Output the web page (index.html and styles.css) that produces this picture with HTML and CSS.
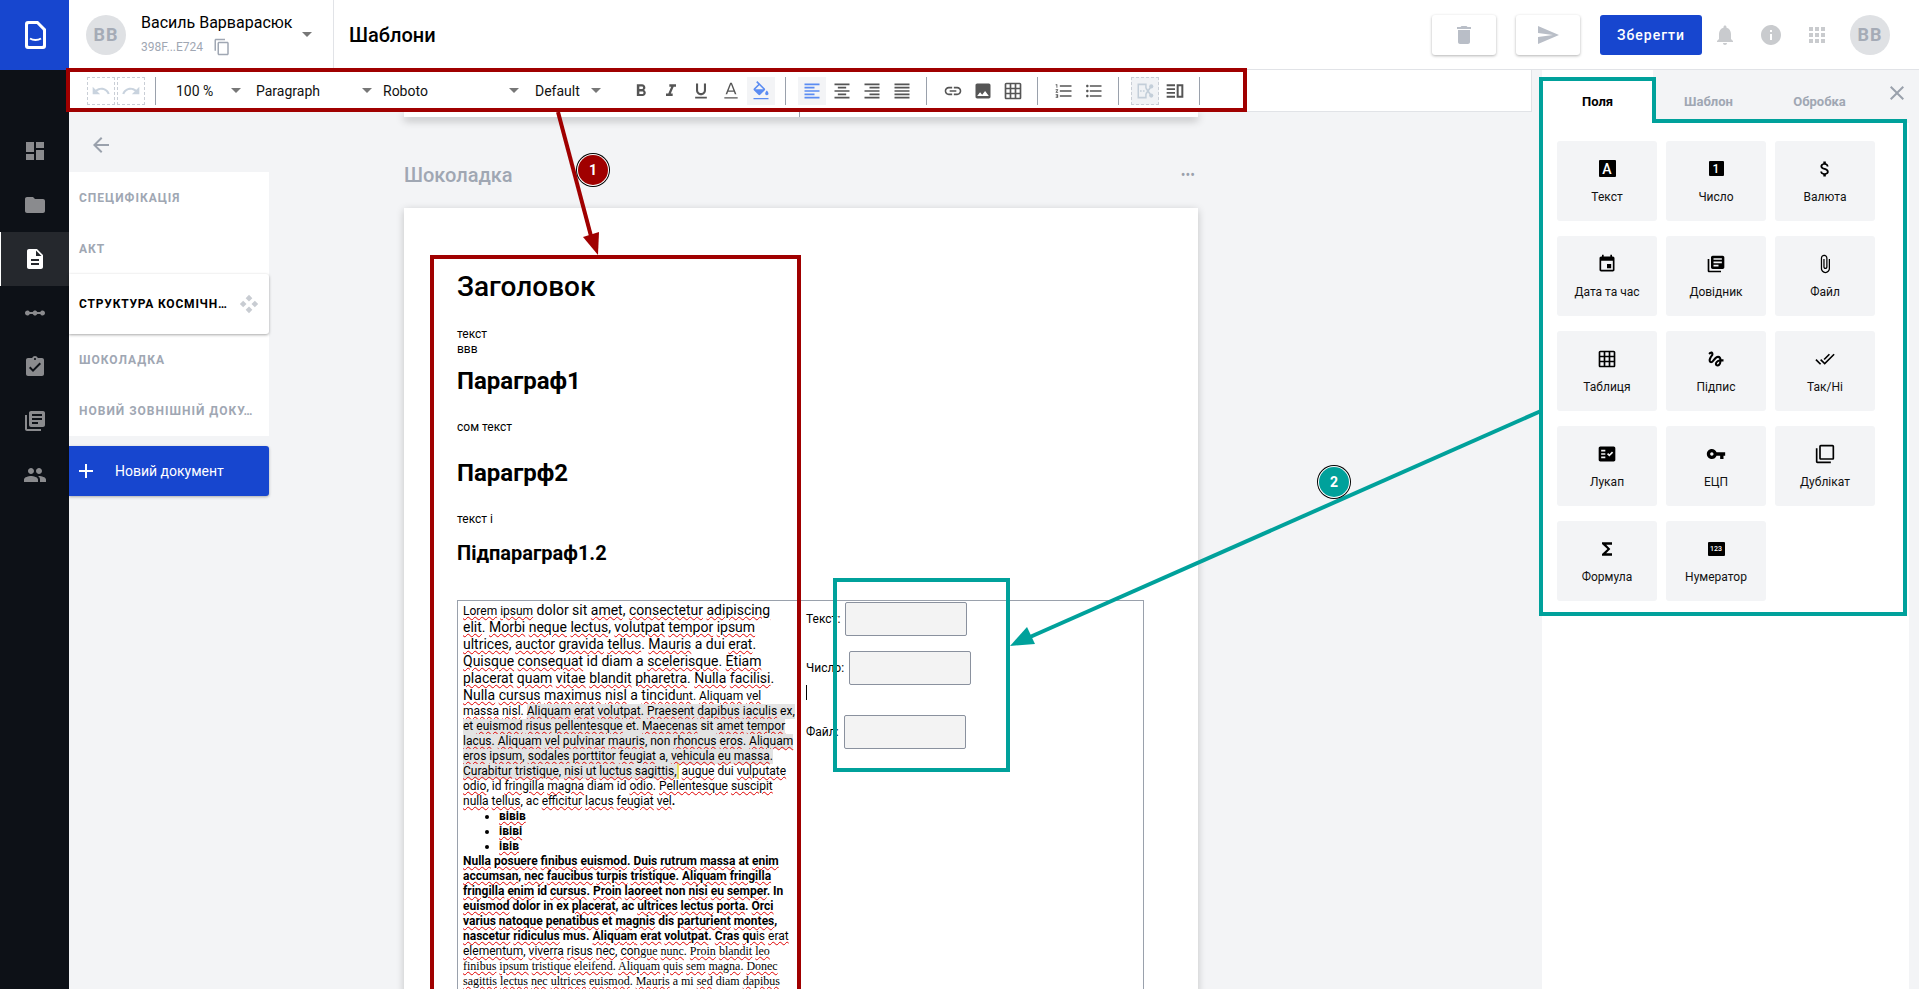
FILE: index.html
```html
<!DOCTYPE html>
<html lang="uk">
<head>
  <meta charset="UTF-8">
  <title>Шаблони</title>
  <link rel="stylesheet" href="styles.css">
</head>
<body>
  <!-- icon sprite -->
  <svg class="sprite" xmlns="http://www.w3.org/2000/svg">
    <symbol id="i-dashboard" viewBox="0 0 24 24"><path d="M3 13h8V3H3v10zm0 8h8v-6H3v6zm10 0h8V11h-8v10zm0-18v6h8V3h-8z"/></symbol>
    <symbol id="i-folder" viewBox="0 0 24 24"><path d="M10 4H4c-1.1 0-1.99.9-1.99 2L2 18c0 1.1.9 2 2 2h16c1.1 0 2-.9 2-2V8c0-1.1-.9-2-2-2h-8l-2-2z"/></symbol>
    <symbol id="i-doc" viewBox="0 0 24 24"><path d="M14 2H6c-1.1 0-1.99.9-1.99 2L4 20c0 1.1.89 2 1.99 2H18c1.1 0 2-.9 2-2V8l-6-6zm2 16H8v-2h8v2zm0-4H8v-2h8v2zm-3-5V3.5L18.5 9H13z"/></symbol>
    <symbol id="i-scale" viewBox="0 0 24 24"><path d="M19.5 9.5c-1.03 0-1.9.62-2.29 1.5h-2.92c-.39-.88-1.26-1.5-2.29-1.5s-1.9.62-2.29 1.5H6.79c-.39-.88-1.26-1.5-2.29-1.5C3.12 9.5 2 10.62 2 12s1.12 2.5 2.5 2.5c1.03 0 1.9-.62 2.29-1.5h2.92c.39.88 1.26 1.5 2.29 1.5s1.9-.62 2.29-1.5h2.92c.39.88 1.26 1.5 2.29 1.5 1.38 0 2.5-1.12 2.5-2.5s-1.12-2.5-2.5-2.5z"/></symbol>
    <symbol id="i-task" viewBox="0 0 24 24"><path d="M19 3h-4.18C14.4 1.84 13.3 1 12 1c-1.3 0-2.4.84-2.82 2H5c-1.1 0-2 .9-2 2v14c0 1.1.9 2 2 2h14c1.1 0 2-.9 2-2V5c0-1.1-.9-2-2-2zm-7 0c.55 0 1 .45 1 1s-.45 1-1 1-1-.45-1-1 .45-1 1-1zm-2 14l-4-4 1.41-1.41L10 14.17l6.59-6.59L18 9l-8 8z"/></symbol>
    <symbol id="i-library" viewBox="0 0 24 24"><path d="M4 6H2v14c0 1.1.9 2 2 2h14v-2H4V6zm16-4H8c-1.1 0-2 .9-2 2v12c0 1.1.9 2 2 2h12c1.1 0 2-.9 2-2V4c0-1.1-.9-2-2-2zm-1 9H9V9h10v2zm-4 4H9v-2h6v2zm4-8H9V5h10v2z"/></symbol>
    <symbol id="i-people" viewBox="0 0 24 24"><path d="M16 11c1.66 0 2.99-1.34 2.99-3S17.66 5 16 5c-1.66 0-3 1.34-3 3s1.34 3 3 3zm-8 0c1.66 0 2.99-1.34 2.99-3S9.66 5 8 5C6.34 5 5 6.34 5 8s1.34 3 3 3zm0 2c-2.33 0-7 1.17-7 3.5V19h14v-2.5c0-2.33-4.67-3.5-7-3.5zm8 0c-.29 0-.62.02-.97.05 1.16.84 1.97 1.97 1.97 3.45V19h6v-2.5c0-2.33-4.67-3.5-7-3.5z"/></symbol>
    <symbol id="i-copy" viewBox="0 0 24 24"><path d="M16 1H4c-1.1 0-2 .9-2 2v14h2V3h12V1zm3 4H8c-1.1 0-2 .9-2 2v14c0 1.1.9 2 2 2h11c1.1 0 2-.9 2-2V7c0-1.1-.9-2-2-2zm0 16H8V7h11v14z"/></symbol>
    <symbol id="i-delete" viewBox="0 0 24 24"><path d="M6 19c0 1.1.9 2 2 2h8c1.1 0 2-.9 2-2V7H6v12zM19 4h-3.5l-1-1h-5l-1 1H5v2h14V4z"/></symbol>
    <symbol id="i-send" viewBox="0 0 24 24"><path d="M2.01 21L23 12 2.01 3 2 10l15 2-15 2z"/></symbol>
    <symbol id="i-bell" viewBox="0 0 24 24"><path d="M12 22c1.1 0 2-.9 2-2h-4c0 1.1.89 2 2 2zm6-6v-5c0-3.07-1.64-5.64-4.5-6.32V4c0-.83-.67-1.5-1.5-1.5s-1.5.67-1.5 1.5v.68C7.63 5.36 6 7.92 6 11v5l-2 2v1h16v-1l-2-2z"/></symbol>
    <symbol id="i-info" viewBox="0 0 24 24"><path d="M12 2C6.48 2 2 6.48 2 12s4.48 10 10 10 10-4.48 10-10S17.52 2 12 2zm1 15h-2v-6h2v6zm0-8h-2V7h2v2z"/></symbol>
    <symbol id="i-apps" viewBox="0 0 24 24"><path d="M4 8h4V4H4v4zm6 12h4v-4h-4v4zm-6 0h4v-4H4v4zm0-6h4v-4H4v4zm6 0h4v-4h-4v4zm6-10v4h4V4h-4zm-6 4h4V4h-4v4zm6 6h4v-4h-4v4zm0 6h4v-4h-4v4z"/></symbol>
    <symbol id="i-undo" viewBox="0 0 24 24"><path d="M12.5 8c-2.65 0-5.05.99-6.9 2.6L2 7v9h9l-3.62-3.62c1.39-1.16 3.16-1.88 5.12-1.88 3.54 0 6.55 2.31 7.6 5.5l2.37-.78C21.08 11.03 17.15 8 12.5 8z"/></symbol>
    <symbol id="i-redo" viewBox="0 0 24 24"><path d="M18.4 10.6C16.55 8.99 14.15 8 11.5 8c-4.65 0-8.58 3.03-9.96 7.22L3.9 16c1.05-3.19 4.05-5.5 7.6-5.5 1.95 0 3.73.72 5.12 1.88L13 16h9V7l-3.6 3.6z"/></symbol>
    <symbol id="i-bold" viewBox="0 0 24 24"><path d="M15.6 10.79c.97-.67 1.65-1.77 1.65-2.79 0-2.26-1.75-4-4-4H7v14h7.04c2.09 0 3.71-1.7 3.71-3.79 0-1.52-.86-2.82-2.15-3.42zM10 6.5h3c.83 0 1.5.67 1.5 1.5s-.67 1.5-1.5 1.5h-3v-3zm3.5 9H10v-3h3.5c.83 0 1.5.67 1.5 1.5s-.67 1.5-1.5 1.5z"/></symbol>
    <symbol id="i-italic" viewBox="0 0 24 24"><path d="M10 4v3h2.21l-3.42 8H6v3h8v-3h-2.21l3.42-8H18V4z"/></symbol>
    <symbol id="i-underline" viewBox="0 0 24 24"><path d="M12 17c3.31 0 6-2.69 6-6V3h-2.5v8c0 1.93-1.57 3.5-3.5 3.5S8.5 12.93 8.5 11V3H6v8c0 3.31 2.69 6 6 6zm-7 2v2h14v-2H5z"/></symbol>
    <symbol id="i-color" viewBox="0 0 24 24"><path d="M11 2L5.500 16h1.900l1.100-3h7l1.100 3h1.900L13 2h-2zm-1.900 9.400L12 4l2.900 7.400H9.100zM4 19.500h16v1.600H4z"/></symbol>
    <symbol id="i-fill" viewBox="0 0 24 24"><path d="M16.560 8.940L7.620 0 6.210 1.410l2.380 2.380-5.150 5.150c-.59.59-.59 1.540 0 2.120l5.500 5.500c.29.29.68.44 1.060.44s.77-.15 1.060-.44l5.500-5.500c.59-.58.59-1.530 0-2.120zM5.210 10L10 5.210 14.790 10H5.210zM19 11.500s-2 2.170-2 3.500c0 1.100.9 2 2 2s2-.9 2-2c0-1.330-2-3.500-2-3.500zM3 20.400h18V22H3z"/></symbol>
    <symbol id="i-left" viewBox="0 0 24 24"><path d="M15 15H3v2h12v-2zm0-8H3v2h12V7zM3 13h18v-2H3v2zm0 8h18v-2H3v2zM3 3v2h18V3H3z"/></symbol>
    <symbol id="i-center" viewBox="0 0 24 24"><path d="M7 15v2h10v-2H7zm-4 6h18v-2H3v2zm0-8h18v-2H3v2zm4-6v2h10V7H7zM3 3v2h18V3H3z"/></symbol>
    <symbol id="i-right" viewBox="0 0 24 24"><path d="M3 21h18v-2H3v2zm6-4h12v-2H9v2zm-6-4h18v-2H3v2zm6-4h12V7H9v2zM3 3v2h18V3H3z"/></symbol>
    <symbol id="i-justify" viewBox="0 0 24 24"><path d="M3 21h18v-2H3v2zm0-4h18v-2H3v2zm0-4h18v-2H3v2zm0-4h18V7H3v2zm0-6v2h18V3H3z"/></symbol>
    <symbol id="i-link" viewBox="0 0 24 24"><path d="M3.9 12c0-1.710 1.390-3.100 3.100-3.100h4V7H7c-2.760 0-5 2.240-5 5s2.240 5 5 5h4v-1.900H7c-1.710 0-3.100-1.390-3.100-3.100zM8 13h8v-2H8v2zm9-6h-4v1.900h4c1.710 0 3.100 1.390 3.100 3.100s-1.390 3.100-3.100 3.100h-4V17h4c2.760 0 5-2.240 5-5s-2.240-5-5-5z"/></symbol>
    <symbol id="i-image" viewBox="0 0 24 24"><path d="M21 19V5c0-1.100-.9-2-2-2H5c-1.100 0-2 .9-2 2v14c0 1.100.9 2 2 2h14c1.100 0 2-.9 2-2zM8.500 13.500l2.500 3.010L14.500 12l4.500 6H5l3.500-4.500z"/></symbol>
    <symbol id="i-grid" viewBox="0 0 24 24"><path d="M20 2H4c-1.1 0-2 .9-2 2v16c0 1.1.9 2 2 2h16c1.1 0 2-.9 2-2V4c0-1.1-.9-2-2-2zM8 20H4v-4h4v4zm0-6H4v-4h4v4zm0-6H4V4h4v4zm6 12h-4v-4h4v4zm0-6h-4v-4h4v4zm0-6h-4V4h4v4zm6 12h-4v-4h4v4zm0-6h-4v-4h4v4zm0-6h-4V4h4v4z"/></symbol>
    <symbol id="i-ol" viewBox="0 0 24 24"><path d="M2 17h2v.5H3v1h1v.5H2v1h3v-4H2v1zm1-9h1V4H2v1h1v3zm-1 3h1.800L2 13.100v.9h3v-1H3.200L5 10.900V10H2v1zm5-6v2h14V5H7zm0 14h14v-2H7v2zm0-6h14v-2H7v2z"/></symbol>
    <symbol id="i-ul" viewBox="0 0 24 24"><path d="M4 10.500c-.83 0-1.500.67-1.500 1.500s.67 1.500 1.500 1.500 1.500-.67 1.500-1.500-.67-1.500-1.500-1.500zm0-6c-.83 0-1.500.67-1.500 1.500S3.170 7.500 4 7.500 5.500 6.830 5.500 6 4.830 4.500 4 4.500zm0 12c-.83 0-1.500.68-1.500 1.500s.68 1.500 1.500 1.500 1.500-.68 1.500-1.500-.67-1.500-1.500-1.500zM7 19h14v-2H7v2zm0-6h14v-2H7v2zm0-8v2h14V5H7z"/></symbol>
    <symbol id="i-split" viewBox="0 0 24 24"><path d="M14 8.500V3H3v18h11v-5.500h-1.800V19H4.800V5h7.400v3.500zM6 11.200h2v1.600H6zm3.500 0h2v1.600h-2z"/><circle cx="19.500" cy="6.500" r="2.500"/><circle cx="19.500" cy="17.500" r="2.500"/><path d="M18.300 8.200L13 15.500M18.300 15.800L13 8.500" fill="none" stroke="currentColor" stroke-width="2"/></symbol>
    <symbol id="i-column" viewBox="0 0 24 24"><path d="M2 4h10v2.200H2zm0 4.600h10v2.200H2zm0 4.600h10v2.200H2zm0 4.600h10V20H2zM14 4h8v16h-8zm2.400 2.300v11.400h3.200V6.300z"/></symbol>
    <symbol id="i-money" viewBox="0 0 24 24"><path d="M11.800 10.900c-2.270-.59-3-1.200-3-2.150 0-1.090 1.010-1.850 2.700-1.850 1.780 0 2.440.85 2.500 2.100h2.210c-.07-1.720-1.120-3.300-3.210-3.810V3h-3v2.160c-1.940.42-3.500 1.680-3.500 3.610 0 2.310 1.910 3.460 4.700 4.130 2.500.6 3 1.480 3 2.410 0 .69-.49 1.790-2.700 1.790-2.060 0-2.870-.92-2.980-2.100h-2.200c.12 2.190 1.760 3.420 3.680 3.830V21h3v-2.150c1.950-.37 3.500-1.500 3.500-3.550 0-2.840-2.430-3.810-4.700-4.400z"/></symbol>
    <symbol id="i-event" viewBox="0 0 24 24"><path d="M17 12h-5v5h5v-5zM16 1v2H8V1H6v2H5c-1.110 0-1.990.9-1.990 2L3 19c0 1.100.89 2 2 2h14c1.100 0 2-.9 2-2V5c0-1.100-.9-2-2-2h-1V1h-2zm3 18H5V8h14v11z"/></symbol>
    <symbol id="i-attach" viewBox="0 0 24 24"><path d="M16.500 6v11.500c0 2.210-1.790 4-4 4s-4-1.790-4-4V5c0-1.380 1.120-2.500 2.500-2.500s2.500 1.120 2.500 2.500v10.500c0 .55-.45 1-1 1s-1-.45-1-1V6H10v9.500c0 1.380 1.120 2.500 2.500 2.500s2.500-1.120 2.500-2.500V5c0-2.210-1.790-4-4-4S7 2.790 7 5v12.500c0 3.040 2.460 5.500 5.500 5.500s5.500-2.460 5.500-5.500V6h-1.500z"/></symbol>
    <symbol id="i-gesture" viewBox="0 0 24 24"><path d="M4.590 6.890c.7-.71 1.400-1.350 1.710-1.220.5.2 0 1.030-.3 1.520-.25.42-2.860 3.890-2.860 6.310 0 1.280.48 2.340 1.340 2.980.75.56 1.740.73 2.640.46 1.070-.31 1.950-1.400 3.060-2.770 1.210-1.490 2.830-3.440 4.080-3.440 1.630 0 1.650 1.010 1.760 1.790-3.780.64-5.380 3.670-5.380 5.370 0 1.700 1.440 3.090 3.210 3.090 1.630 0 4.290-1.330 4.690-6.100H21v-2.500h-2.470c-.15-1.650-1.090-4.200-4.030-4.200-2.250 0-4.180 1.910-4.940 2.840-.58.73-2.060 2.480-2.290 2.720-.25.3-.68.84-1.110.84-.45 0-.72-.83-.36-1.920.35-1.090 1.400-2.860 1.850-3.520.78-1.140 1.300-1.920 1.300-3.280C8.950 3.690 7.310 3 6.440 3 5.120 3 3.970 4 3.720 4.250c-.36.36-.66.66-.88.93l1.750 1.710zm9.290 11.660c-.31 0-.74-.26-.74-.72 0-.6.73-2.200 2.870-2.760-.3 2.690-1.430 3.480-2.130 3.480z"/></symbol>
    <symbol id="i-done" viewBox="0 0 24 24"><path d="M18 7l-1.410-1.410-6.340 6.340 1.410 1.410L18 7zm4.240-1.410L11.660 16.170 7.480 12l-1.410 1.410L11.660 19l12-12-1.420-1.410zM.41 13.410L6 19l1.410-1.410L1.830 12 .41 13.410z"/></symbol>
    <symbol id="i-lookup" viewBox="0 0 24 24"><path d="M20 3H4c-1.100 0-2 .9-2 2v14c0 1.100.9 2 2 2h16c1.100 0 2-.9 2-2V5c0-1.100-.9-2-2-2zM10 17H5v-2h5v2zm0-4H5v-2h5v2zm0-4H5V7h5v2zm4.820 6L12 12.160l1.410-1.410 1.410 1.420L17.990 9l1.420 1.420L14.820 15z"/></symbol>
    <symbol id="i-key" viewBox="0 0 24 24"><path d="M12.650 10C11.830 7.670 9.610 6 7 6c-3.310 0-6 2.690-6 6s2.690 6 6 6c2.610 0 4.830-1.670 5.650-4H17v4h4v-4h2v-4H12.650zM7 14c-1.100 0-2-.9-2-2s.9-2 2-2 2 .9 2 2-.9 2-2 2z"/></symbol>
    <symbol id="i-dup" viewBox="0 0 24 24"><path d="M3 5H1v16c0 1.100.9 2 2 2h16v-2H3V5zm18-4H7c-1.100 0-2 .9-2 2v14c0 1.100.9 2 2 2h14c1.100 0 2-.9 2-2V3c0-1.100-.9-2-2-2zm0 16H7V3h14v14z"/></symbol>
    <symbol id="i-sum" viewBox="0 0 24 24"><path d="M18 4H6v2l6.500 6L6 18v2h12v-3h-7l5-5-5-5h7z"/></symbol>
    <symbol id="i-close" viewBox="0 0 24 24"><path d="M19 6.410L17.590 5 12 10.590 6.410 5 5 6.410 10.590 12 5 17.590 6.410 19 12 13.410 17.590 19 19 17.590 13.410 12z"/></symbol>
    <symbol id="i-back" viewBox="0 0 24 24"><path d="M20 11H7.830l5.590-5.590L12 4l-8 8 8 8 1.410-1.410L7.830 13H20v-2z"/></symbol>
    <symbol id="i-add" viewBox="0 0 24 24"><path d="M19 13h-6v6h-2v-6H5v-2h6V5h2v6h6v2z"/></symbol>
    <symbol id="i-move" viewBox="0 0 24 24"><path d="M12 1l4 4-4 4-4-4zM12 15l4 4-4 4-4-4zM5 8l4 4-4 4-4-4zM19 8l4 4-4 4-4-4z"/></symbol>
  </svg>

  <div class="app">
    <!-- main rail -->
    <nav class="rail">
      <div class="rail-logo">
        <svg class="logo" viewBox="0 0 22 28"><path d="M4 0h10l8 8v17a3 3 0 0 1-3 3H4a3 3 0 0 1-3-3V3a3 3 0 0 1 3-3z" fill="#fff"/><path d="M5 3h7.800L19 9.200V24a1 1 0 0 1-1 1H5a1 1 0 0 1-1-1V4a1 1 0 0 1 1-1z" fill="#1746cf"/><path d="M6 17.500c3 2 8 2 11 0" fill="none" stroke="#fff" stroke-width="2"/></svg>
      </div>
      <div class="rail-items">
        <a class="rail-item"><svg class="ic-24"><use href="#i-dashboard"/></svg></a>
        <a class="rail-item"><svg class="ic-24"><use href="#i-folder"/></svg></a>
        <a class="rail-item active"><svg class="ic-24"><use href="#i-doc"/></svg></a>
        <a class="rail-item"><svg class="ic-24"><use href="#i-scale"/></svg></a>
        <a class="rail-item"><svg class="ic-24"><use href="#i-task"/></svg></a>
        <a class="rail-item"><svg class="ic-24"><use href="#i-library"/></svg></a>
        <a class="rail-item"><svg class="ic-24"><use href="#i-people"/></svg></a>
      </div>
    </nav>

    <div class="main">
      <header class="header">
        <div class="user">
          <div class="avatar">ВВ</div>
          <div class="user-info">
            <div class="user-name">Василь Варварасюк</div>
            <div class="user-id">398F...E724 <svg class="ic-copy"><use href="#i-copy"/></svg></div>
          </div>
          <span class="caret user-caret"></span>
        </div>
        <h1 class="page-title">Шаблони</h1>
        <div class="header-actions">
          <button class="btn-ghost"><svg class="ic-24"><use href="#i-delete"/></svg></button>
          <button class="btn-ghost"><svg class="ic-24"><use href="#i-send"/></svg></button>
          <button class="btn-save">Зберегти</button>
          <svg class="ic-24 head-ic bell"><use href="#i-bell"/></svg>
          <svg class="ic-24 head-ic"><use href="#i-info"/></svg>
          <svg class="ic-24 head-ic"><use href="#i-apps"/></svg>
          <div class="avatar">ВВ</div>
        </div>
      </header>

      <div class="body">
        <div class="center">
          <div class="toolbar">
            <div class="tool dashed"><svg class="ic-20"><use href="#i-undo"/></svg></div>
            <div class="tool dashed"><svg class="ic-20"><use href="#i-redo"/></svg></div>
            <span class="sep first"></span>
            <div class="select s-zoom">100 %<span class="caret"></span></div>
            <div class="select s-para">Paragraph<span class="caret"></span></div>
            <div class="select s-font">Roboto<span class="caret"></span></div>
            <div class="select s-size">Default<span class="caret"></span></div>
            <div class="tools">
              <div class="tool"><svg class="ic-20"><use href="#i-bold"/></svg></div>
              <div class="tool"><svg class="ic-20"><use href="#i-italic"/></svg></div>
              <div class="tool"><svg class="ic-20"><use href="#i-underline"/></svg></div>
              <div class="tool"><svg class="ic-20"><use href="#i-color"/></svg></div>
              <div class="tool on"><svg class="ic-20"><use href="#i-fill"/></svg></div>
            </div>
            <span class="sep"></span>
            <div class="tools">
              <div class="tool on"><svg class="ic-20"><use href="#i-left"/></svg></div>
              <div class="tool"><svg class="ic-20"><use href="#i-center"/></svg></div>
              <div class="tool"><svg class="ic-20"><use href="#i-right"/></svg></div>
              <div class="tool"><svg class="ic-20"><use href="#i-justify"/></svg></div>
            </div>
            <span class="sep"></span>
            <div class="tools">
              <div class="tool"><svg class="ic-20"><use href="#i-link"/></svg></div>
              <div class="tool"><svg class="ic-20"><use href="#i-image"/></svg></div>
              <div class="tool"><svg class="ic-20"><use href="#i-grid"/></svg></div>
            </div>
            <span class="sep"></span>
            <div class="tools">
              <div class="tool"><svg class="ic-20"><use href="#i-ol"/></svg></div>
              <div class="tool"><svg class="ic-20"><use href="#i-ul"/></svg></div>
            </div>
            <span class="sep"></span>
            <div class="tools">
              <div class="tool dashed pale"><svg class="ic-20"><use href="#i-split"/></svg></div>
              <div class="tool"><svg class="ic-20"><use href="#i-column"/></svg></div>
            </div>
            <span class="sep"></span>
          </div>

          <div class="workspace">
            <aside class="doc-nav">
              <div class="back"><svg class="ic-24"><use href="#i-back"/></svg></div>
              <ul class="doc-list">
                <li>СПЕЦИФІКАЦІЯ</li>
                <li>АКТ</li>
                <li class="active"><span class="doc-name">СТРУКТУРА КОСМІЧН…</span><svg class="ic-move"><use href="#i-move"/></svg></li>
                <li>ШОКОЛАДКА</li>
                <li>НОВИЙ ЗОВНІШНІЙ ДОКУ…</li>
              </ul>
              <button class="btn-new"><svg class="ic-24"><use href="#i-add"/></svg><span>Новий документ</span></button>
            </aside>

            <section class="docs">
              <div class="prev-page"><span class="prev-line"></span></div>
              <div class="doc-head">
                <span>Шоколадка</span>
                <span class="doc-more">•••</span>
              </div>
              <article class="page">
                <h2 class="t1">Заголовок</h2>
                <p class="txt mt24">текст<br>ввв</p>
                <h3 class="t2 mt10">Параграф1</h3>
                <p class="txt mt25">сом текст</p>
                <h3 class="t2 mt24">Парагрф2</h3>
                <p class="txt mt25">текст і</p>
                <h4 class="t3">Підпараграф1.2</h4>

                <div class="tbl">
                  <div class="cell-left">
                    <div class="big"><span class="small"><u>Lorem</u> <u>ipsum</u></span> dolor sit <u>amet</u>, <u>consectetur</u> <u>adipiscing</u></div>
                    <div class="big"><u>elit</u>. <u>Morbi</u> <u>neque</u> <u>lectus</u>, <u>volutpat</u> <u>tempor</u> <u>ipsum</u></div>
                    <div class="big"><u>ultrices</u>, <u>auctor</u> <u>gravida</u> <u>tellus</u>. <u>Mauris</u> a dui <u>erat</u>.</div>
                    <div class="big"><u>Quisque</u> <u>consequat</u> id diam a <u>scelerisque</u>. <u>Etiam</u></div>
                    <div class="big"><u>placerat</u> <u>quam</u> <u>vitae</u> <u>blandit</u> <u>pharetra</u>. <u>Nulla</u> <u>facilisi</u>.</div>
                    <div class="big"><u>Nulla</u> <u>cursus</u> <u>maximus</u> <u>nisl</u> a <u>tincid</u><span class="small"><u>unt</u>. <u>Aliquam</u> <u>vel</u></span></div>
                    <div class="ln"><u>massa</u> <u>nisl</u>. <mark><u>Aliquam</u> <u>erat</u> <u>volutpat</u>. <u>Praesent</u> <u>dapibus</u> <u>iaculis</u> ex,</mark></div>
                    <div class="ln"><mark>et <u>euismod</u> <u>risus</u> <u>pellentesque</u> et. <u>Maecenas</u> sit <u>amet</u> <u>tempor</u></mark></div>
                    <div class="ln"><mark><u>lacus</u>. <u>Aliquam</u> <u>vel</u> <u>pulvinar</u> <u>mauris</u>, non <u>rhoncus</u> <u>eros</u>. <u>Aliquam</u></mark></div>
                    <div class="ln"><mark><u>eros</u> <u>ipsum</u>, <u>sodales</u> <u>porttitor</u> <u>feugiat</u> a, <u>vehicula</u> <u>eu</u> <u>massa</u>.</mark></div>
                    <div class="ln"><mark><u>Curabitur</u> <u>tristique</u>, <u>nisi</u> <u>ut</u> <u>luctus</u> <u>sagittis</u>,</mark><span class="cursor-mark"></span> <u>augue</u> dui <u>vulputate</u></div>
                    <div class="ln"><u>odio</u>, id <u>fringilla</u> <u>magna</u> diam id <u>odio</u>. <u>Pellentesque</u> <u>suscipit</u></div>
                    <div class="ln"><u>nulla</u> <u>tellus</u>, ac <u>efficitur</u> <u>lacus</u> <u>feugiat</u> <u>vel</u><b>.</b></div>
                    <ul class="bullets">
                      <li><u>вівів</u></li>
                      <li><u>івіві</u></li>
                      <li><u>івів</u></li>
                    </ul>
                    <div class="ln strong"><u>Nulla</u> <u>posuere</u> <u>finibus</u> <u>euismod</u>. <u>Duis</u> <u>rutrum</u> <u>massa</u> at <u>enim</u></div>
                    <div class="ln strong"><u>accumsan</u>, <u>nec</u> <u>faucibus</u> <u>turpis</u> <u>tristique</u>. <u>Aliquam</u> <u>fringilla</u></div>
                    <div class="ln strong"><u>fringilla</u> <u>enim</u> id <u>cursus</u>. <u>Proin</u> <u>laoreet</u> non <u>nisi</u> <u>eu</u> <u>semper</u>. In</div>
                    <div class="ln strong"><u>euismod</u> dolor in ex <u>placerat</u>, ac <u>ultrices</u> <u>lectus</u> <u>porta</u>. <u>Orci</u></div>
                    <div class="ln strong"><u>varius</u> <u>natoque</u> <u>penatibus</u> et <u>magnis</u> dis <u>parturient</u> <u>montes</u>,</div>
                    <div class="ln strong"><u>nascetur</u> <u>ridiculus</u> mus. <u>Aliquam</u> <u>erat</u> <u>volutpat</u>. <u>Cras</u> <u>qu</u><span class="plain"><u>is</u> <u>erat</u></span></div>
                    <div class="ln"><u>elementum</u>, <u>viverra</u> <u>risus</u> <u>nec</u>, <u>con</u><span class="serif"><u>gue</u> <u>nunc</u>. <u>Proin</u> <u>blandit</u> <u>leo</u></span></div>
                    <div class="ln serif"><u>finibus</u> <u>ipsum</u> <u>tristique</u> <u>eleifend</u>. <u>Aliquam</u> <u>quis</u> <u>sem</u> <u>magna</u>. <u>Donec</u></div>
                    <div class="ln serif"><u>sagittis</u> <u>lectus</u> <u>nec</u> <u>ultrices</u> <u>euismod</u>. <u>Mauris</u> a mi <u>sed</u> diam <u>dapibus</u></div>
                  </div>
                  <div class="cell-right">
                    <div class="field"><label>Текст:</label><span class="input"></span></div>
                    <div class="field"><label>Число:</label><span class="input"></span></div>
                    <div class="caret-line"></div>
                    <div class="field"><label>Файл:</label><span class="input"></span></div>
                  </div>
                </div>
              </article>
            </section>
          </div>
        </div>

        <aside class="panel">
          <div class="tabs">
            <div class="tab active">Поля</div>
            <div class="tab">Шаблон</div>
            <div class="tab">Обробка</div>
            <svg class="ic-close"><use href="#i-close"/></svg>
          </div>
          <div class="cards">
            <div class="card"><span class="card-ic box-a">A</span><span>Текст</span></div>
            <div class="card"><span class="card-ic box-1">1</span><span>Число</span></div>
            <div class="card"><svg class="card-ic"><use href="#i-money"/></svg><span>Валюта</span></div>
            <div class="card"><svg class="card-ic"><use href="#i-event"/></svg><span>Дата та час</span></div>
            <div class="card"><svg class="card-ic"><use href="#i-library"/></svg><span>Довідник</span></div>
            <div class="card"><svg class="card-ic"><use href="#i-attach"/></svg><span>Файл</span></div>
            <div class="card"><svg class="card-ic"><use href="#i-grid"/></svg><span>Таблиця</span></div>
            <div class="card"><svg class="card-ic"><use href="#i-gesture"/></svg><span>Підпис</span></div>
            <div class="card"><svg class="card-ic"><use href="#i-done"/></svg><span>Так/Ні</span></div>
            <div class="card"><svg class="card-ic"><use href="#i-lookup"/></svg><span>Лукап</span></div>
            <div class="card"><svg class="card-ic"><use href="#i-key"/></svg><span>ЕЦП</span></div>
            <div class="card"><svg class="card-ic"><use href="#i-dup"/></svg><span>Дублікат</span></div>
            <div class="card"><svg class="card-ic"><use href="#i-sum"/></svg><span>Формула</span></div>
            <div class="card"><span class="card-ic box-123">123</span><span>Нумератор</span></div>
          </div>
        </aside>
      </div>
    </div>
  </div>

  <!-- annotations drawn over the screenshot -->
  <svg class="notes" viewBox="0 0 1919 989">
    <g fill="none" stroke="#a00000" stroke-width="4">
      <rect x="68" y="70" width="1177" height="40"/>
      <rect x="432" y="257" width="367" height="800"/>
      <path d="M558 112L591 236"/>
    </g>
    <path d="M598 255L583 237L599 232Z" fill="#a00000"/>
    <g fill="none" stroke="#00a19b" stroke-width="4">
      <path d="M1541 79H1654V121H1905V614H1541Z"/>
      <rect x="835" y="580" width="173" height="190"/>
      <path d="M1541 411L1030 637"/>
    </g>
    <path d="M1010 646L1027 627L1035 644Z" fill="#00a19b"/>
    <circle cx="593" cy="170" r="17" fill="#000"/>
    <circle cx="593" cy="170" r="16" fill="#fff"/>
    <circle cx="593" cy="170" r="15" fill="#a00000"/>
    <text class="note-num" x="593" y="175">1</text>
    <circle cx="1334" cy="482" r="17" fill="#000"/>
    <circle cx="1334" cy="482" r="16" fill="#fff"/>
    <circle cx="1334" cy="482" r="15" fill="#00a19b"/>
    <text class="note-num" x="1334" y="487">2</text>
  </svg>
</body>
</html>
```

FILE: styles.css
```css
* {
  box-sizing: border-box;
}

html,
body {
  margin: 0;
  height: 100%;
  overflow: hidden;
}

body {
  font-family: Roboto, "Noto Sans", sans-serif;
  color: #000;
  background: #f3f4f6;
}

.sprite {
  display: none;
}

svg {
  fill: currentColor;
  flex: none;
}

.ic-24 { width: 24px; height: 24px; }
.ic-20 { width: 20px; height: 20px; }

.app {
  display: flex;
  height: 989px;
}

/* rail */
.rail {
  width: 69px;
  flex: none;
  background: #0d1117;
  color: #8a8b8e;
}

.rail-logo {
  height: 70px;
  background: #1746cf;
  display: flex;
  align-items: center;
  justify-content: center;
}

.logo {
  width: 22px;
  height: 28px;
}

.rail-items {
  padding-top: 54px;
}

.rail-item {
  height: 54px;
  display: flex;
  align-items: center;
  justify-content: center;
}

.rail-item.active {
  background: #25282d;
  border-left: 1px solid #fff;
  color: #fff;
}

.main {
  flex: 1;
  min-width: 0;
  display: flex;
  flex-direction: column;
}

/* header */
.header {
  height: 70px;
  flex: none;
  background: #fff;
  border-bottom: 1px solid #e1e3e7;
  display: flex;
  align-items: center;
}

.user {
  width: 265px;
  height: 100%;
  border-right: 1px solid #e1e3e7;
  display: flex;
  align-items: center;
  padding-left: 17px;
}

.avatar {
  width: 40px;
  height: 40px;
  border-radius: 50%;
  background: #dfe1e4;
  color: #a5abb6;
  font-size: 18px;
  font-weight: 700;
  letter-spacing: 1px;
  display: flex;
  align-items: center;
  justify-content: center;
  flex: none;
}

.user-info {
  margin-left: 15px;
}

.user-name {
  font-size: 16px;
  line-height: 20px;
}

.user-id {
  margin-top: 5px;
  font-size: 12px;
  line-height: 16px;
  color: #a0a7b3;
  display: flex;
  align-items: center;
  gap: 10px;
}

.ic-copy {
  width: 18px;
  height: 18px;
}

.caret {
  display: inline-block;
  width: 0;
  height: 0;
  border-left: 5px solid transparent;
  border-right: 5px solid transparent;
  border-top: 5px solid #777;
}

.user-caret {
  margin-left: 10px;
}

.page-title {
  margin: 0 0 0 15px;
  font-size: 20px;
  font-weight: 500;
}

.header-actions {
  margin-left: auto;
  padding-right: 29px;
  display: flex;
  align-items: center;
}

.btn-ghost {
  width: 64px;
  height: 40px;
  border: 0;
  border-radius: 3px;
  background: #fff;
  color: #b9bec7;
  box-shadow: 0 1px 3px rgba(0, 0, 0, .3);
  margin-right: 20px;
  display: flex;
  align-items: center;
  justify-content: center;
}

.btn-save {
  width: 102px;
  height: 40px;
  border: 0;
  border-radius: 3px;
  background: #1746cf;
  color: #fff;
  font: 500 14px Roboto, sans-serif;
  letter-spacing: 1px;
}

.head-ic {
  color: #c9cbce;
  margin-left: 11px;
  margin-right: 11px;
}

.header-actions .avatar {
  margin-left: 10px;
}

.body {
  flex: 1;
  min-height: 0;
  display: flex;
}

.center {
  flex: 1;
  min-width: 0;
  display: flex;
  flex-direction: column;
}

/* toolbar */
.toolbar {
  height: 42px;
  flex: none;
  background: #fff;
  border-bottom: 1px solid #e1e3e7;
  border-right: 1px solid #e1e3e7;
  display: flex;
  align-items: center;
  padding-left: 18px;
  color: #555;
  position: relative;
  z-index: 2;
}

.tools {
  display: flex;
  gap: 2px;
}

.tool {
  width: 28px;
  height: 28px;
  display: flex;
  align-items: center;
  justify-content: center;
}

.toolbar > .tool + .tool {
  margin-left: 2px;
}

.tool.dashed {
  border: 1px dashed #c9ced6;
  color: #c9d3de;
}

.tool.pale {
  background: #f0f2f5;
  color: #c3ced9;
}

.tool.on {
  background: #f3f4f6;
  color: #5b8cf2;
}

.sep {
  width: 1px;
  height: 28px;
  background: #9aa1ac;
  margin: 0 12px 0 10px;
}

.sep.first {
  margin: 0 0 0 10px;
}

.select {
  font-size: 14px;
  color: #111;
  display: flex;
  align-items: center;
  justify-content: space-between;
}

.s-zoom { width: 65px; margin-left: 20px; margin-right: 15px; }
.s-para { width: 116px; margin-right: 11px; }
.s-font { width: 136px; margin-right: 16px; }
.s-size { width: 66px; margin-right: 26px; }

/* second column */
.workspace {
  flex: 1;
  min-height: 0;
  display: flex;
}

.doc-nav {
  width: 200px;
  flex: none;
}

.back {
  height: 60px;
  padding: 21px 0 0 20px;
  color: #9aa1ac;
}

.doc-list {
  list-style: none;
  margin: 0;
  padding: 0;
  background: #fff;
}

.doc-list li {
  height: 51px;
  display: flex;
  align-items: center;
  padding-left: 10px;
  font-size: 12px;
  font-weight: 700;
  letter-spacing: 1px;
  color: #a0a7b3;
  white-space: nowrap;
}

.doc-list li.active {
  height: 60px;
  color: #000;
  border-radius: 0 3px 3px 0;
  box-shadow: 0 1px 3px rgba(0, 0, 0, .35);
  position: relative;
}

.doc-name {
  width: 150px;
  letter-spacing: .8px;
}

.ic-move {
  width: 20px;
  height: 20px;
  margin-left: 10px;
  color: #c8ccd2;
}

.btn-new {
  width: 200px;
  height: 50px;
  margin-top: 10px;
  border: 0;
  border-radius: 0 3px 3px 0;
  background: #1746cf;
  color: #fff;
  font: 14px Roboto, sans-serif;
  display: flex;
  align-items: center;
  padding: 0 0 0 5px;
  box-shadow: 0 1px 3px rgba(0, 0, 0, .3);
}

.btn-new span {
  margin-left: 17px;
}

.docs {
  flex: 1;
  min-width: 0;
  padding-left: 135px;
  overflow: hidden;
}

.prev-page {
  width: 794px;
  height: 5px;
  background: #fff;
  box-shadow: 0 3px 8px rgba(0, 0, 0, .3);
  position: relative;
}

.prev-line {
  position: absolute;
  left: 395px;
  top: 0;
  width: 1px;
  height: 5px;
  background: #9aa1ac;
}

.doc-head {
  width: 794px;
  height: 91px;
  padding-top: 24px;
  display: flex;
  align-items: center;
  justify-content: space-between;
  color: #a0a7b3;
  font-size: 20px;
  font-weight: 500;
}

.doc-more {
  font-size: 14px;
  font-weight: 400;
  color: #9aa1ac;
  margin-right: 3px;
}

.page {
  width: 794px;
  background: #fff;
  padding: 63px 0 0 53px;
  height: 900px;
  box-shadow: 0 2px 8px rgba(0, 0, 0, .2);
}

.t1 {
  margin: 0;
  font-size: 28px;
  line-height: 32px;
  font-weight: 500;
}

.t2 {
  margin: 0;
  font-size: 24px;
  line-height: 28px;
  font-weight: 700;
}

.t3 {
  margin: 14px 0 0;
  font-size: 20px;
  line-height: 24px;
  font-weight: 700;
}

.txt {
  margin: 0;
  font-size: 12px;
  line-height: 15px;
}

.mt10 { margin-top: 10px; }
.mt24 { margin-top: 24px; }
.mt25 { margin-top: 25px; }

/* table in the document */
.tbl {
  width: 687px;
  margin-top: 35px;
  height: 500px;
  border: 1px solid #9aa1ac;
  display: flex;
}

.cell-left {
  width: 348px;
  flex: none;
  padding: 1px 0 0 5px;
  white-space: nowrap;
}

.big {
  font-size: 14px;
  line-height: 17px;
}

.ln {
  font-size: 12px;
  line-height: 15px;
}

.small {
  font-size: 12px;
  line-height: 1;
}

.strong {
  font-weight: 700;
}

.plain {
  font-weight: 400;
}

.serif {
  font-family: "Liberation Serif", serif;
}

span.serif {
  line-height: 1;
}

u {
  text-decoration: underline wavy #e00000 1px;
  text-underline-offset: 1px;
}

mark {
  display: inline-block;
  height: 15px;
  vertical-align: top;
  background: #e3e3e3;
  color: inherit;
}

.cursor-mark {
  display: inline-block;
  width: 2px;
  height: 15px;
  vertical-align: top;
  background: #e8e060;
}

.bullets {
  margin: 0;
  padding-left: 36px;
  font-size: 12px;
  line-height: 15px;
  font-weight: 700;
}

.cell-right {
  flex: 1;
  padding-top: 1px;
  font-size: 12px;
}

.field {
  height: 34px;
  display: flex;
  align-items: center;
  gap: 5px;
  margin-bottom: 15px;
}

.input {
  width: 122px;
  height: 34px;
  background: #f3f3f3;
  border: 1px solid #8a919e;
  border-radius: 2px;
}

.caret-line {
  width: 1px;
  height: 15px;
  background: #000;
  margin: -15px 0 15px;
}

/* right panel */
.panel {
  width: 387px;
  flex: none;
  padding: 0 10px;
}

.tabs {
  height: 53px;
  display: flex;
  position: relative;
}

.tab {
  width: 111px;
  padding-top: 24px;
  text-align: center;
  font-size: 13px;
  line-height: 16px;
  font-weight: 700;
  color: #a0a7b3;
}

.tab.active {
  background: #fff;
  color: #000;
}

.ic-close {
  width: 24px;
  height: 24px;
  color: #9aa1ac;
  margin: 11px 0 0 10px;
}

.cards {
  background: #fff;
  height: 866px;
  padding: 18px 15px;
  display: grid;
  grid-template-columns: repeat(3, 100px);
  grid-auto-rows: 80px;
  gap: 15px 9px;
  align-content: start;
}

.card {
  background: #f3f4f6;
  border-radius: 3px;
  display: flex;
  flex-direction: column;
  align-items: center;
  font-size: 12px;
  line-height: 16px;
  color: #111;
}

.card-ic {
  width: 20px;
  height: 20px;
  margin: 18px 0 10px;
  color: #000;
}

.box-a,
.box-1,
.box-123 {
  background: #000;
  color: #fff;
  border-radius: 1px;
  display: flex;
  align-items: center;
  justify-content: center;
  font-weight: 500;
  line-height: 1;
}

.box-a { width: 17px; height: 17px; margin-top: 19px; margin-bottom: 12px; font-size: 14px; }
.box-1 { width: 15px; height: 15px; margin-top: 20px; margin-bottom: 13px; font-size: 12px; }
.box-123 { width: 17px; height: 14px; margin-top: 21px; margin-bottom: 13px; font-size: 7px; }

/* annotations */
.notes {
  position: absolute;
  left: 0;
  top: 0;
  width: 1919px;
  height: 989px;
  pointer-events: none;
  z-index: 10;
}

.note-num {
  fill: #fff;
  font-size: 14px;
  font-weight: 700;
  text-anchor: middle;
}
```
